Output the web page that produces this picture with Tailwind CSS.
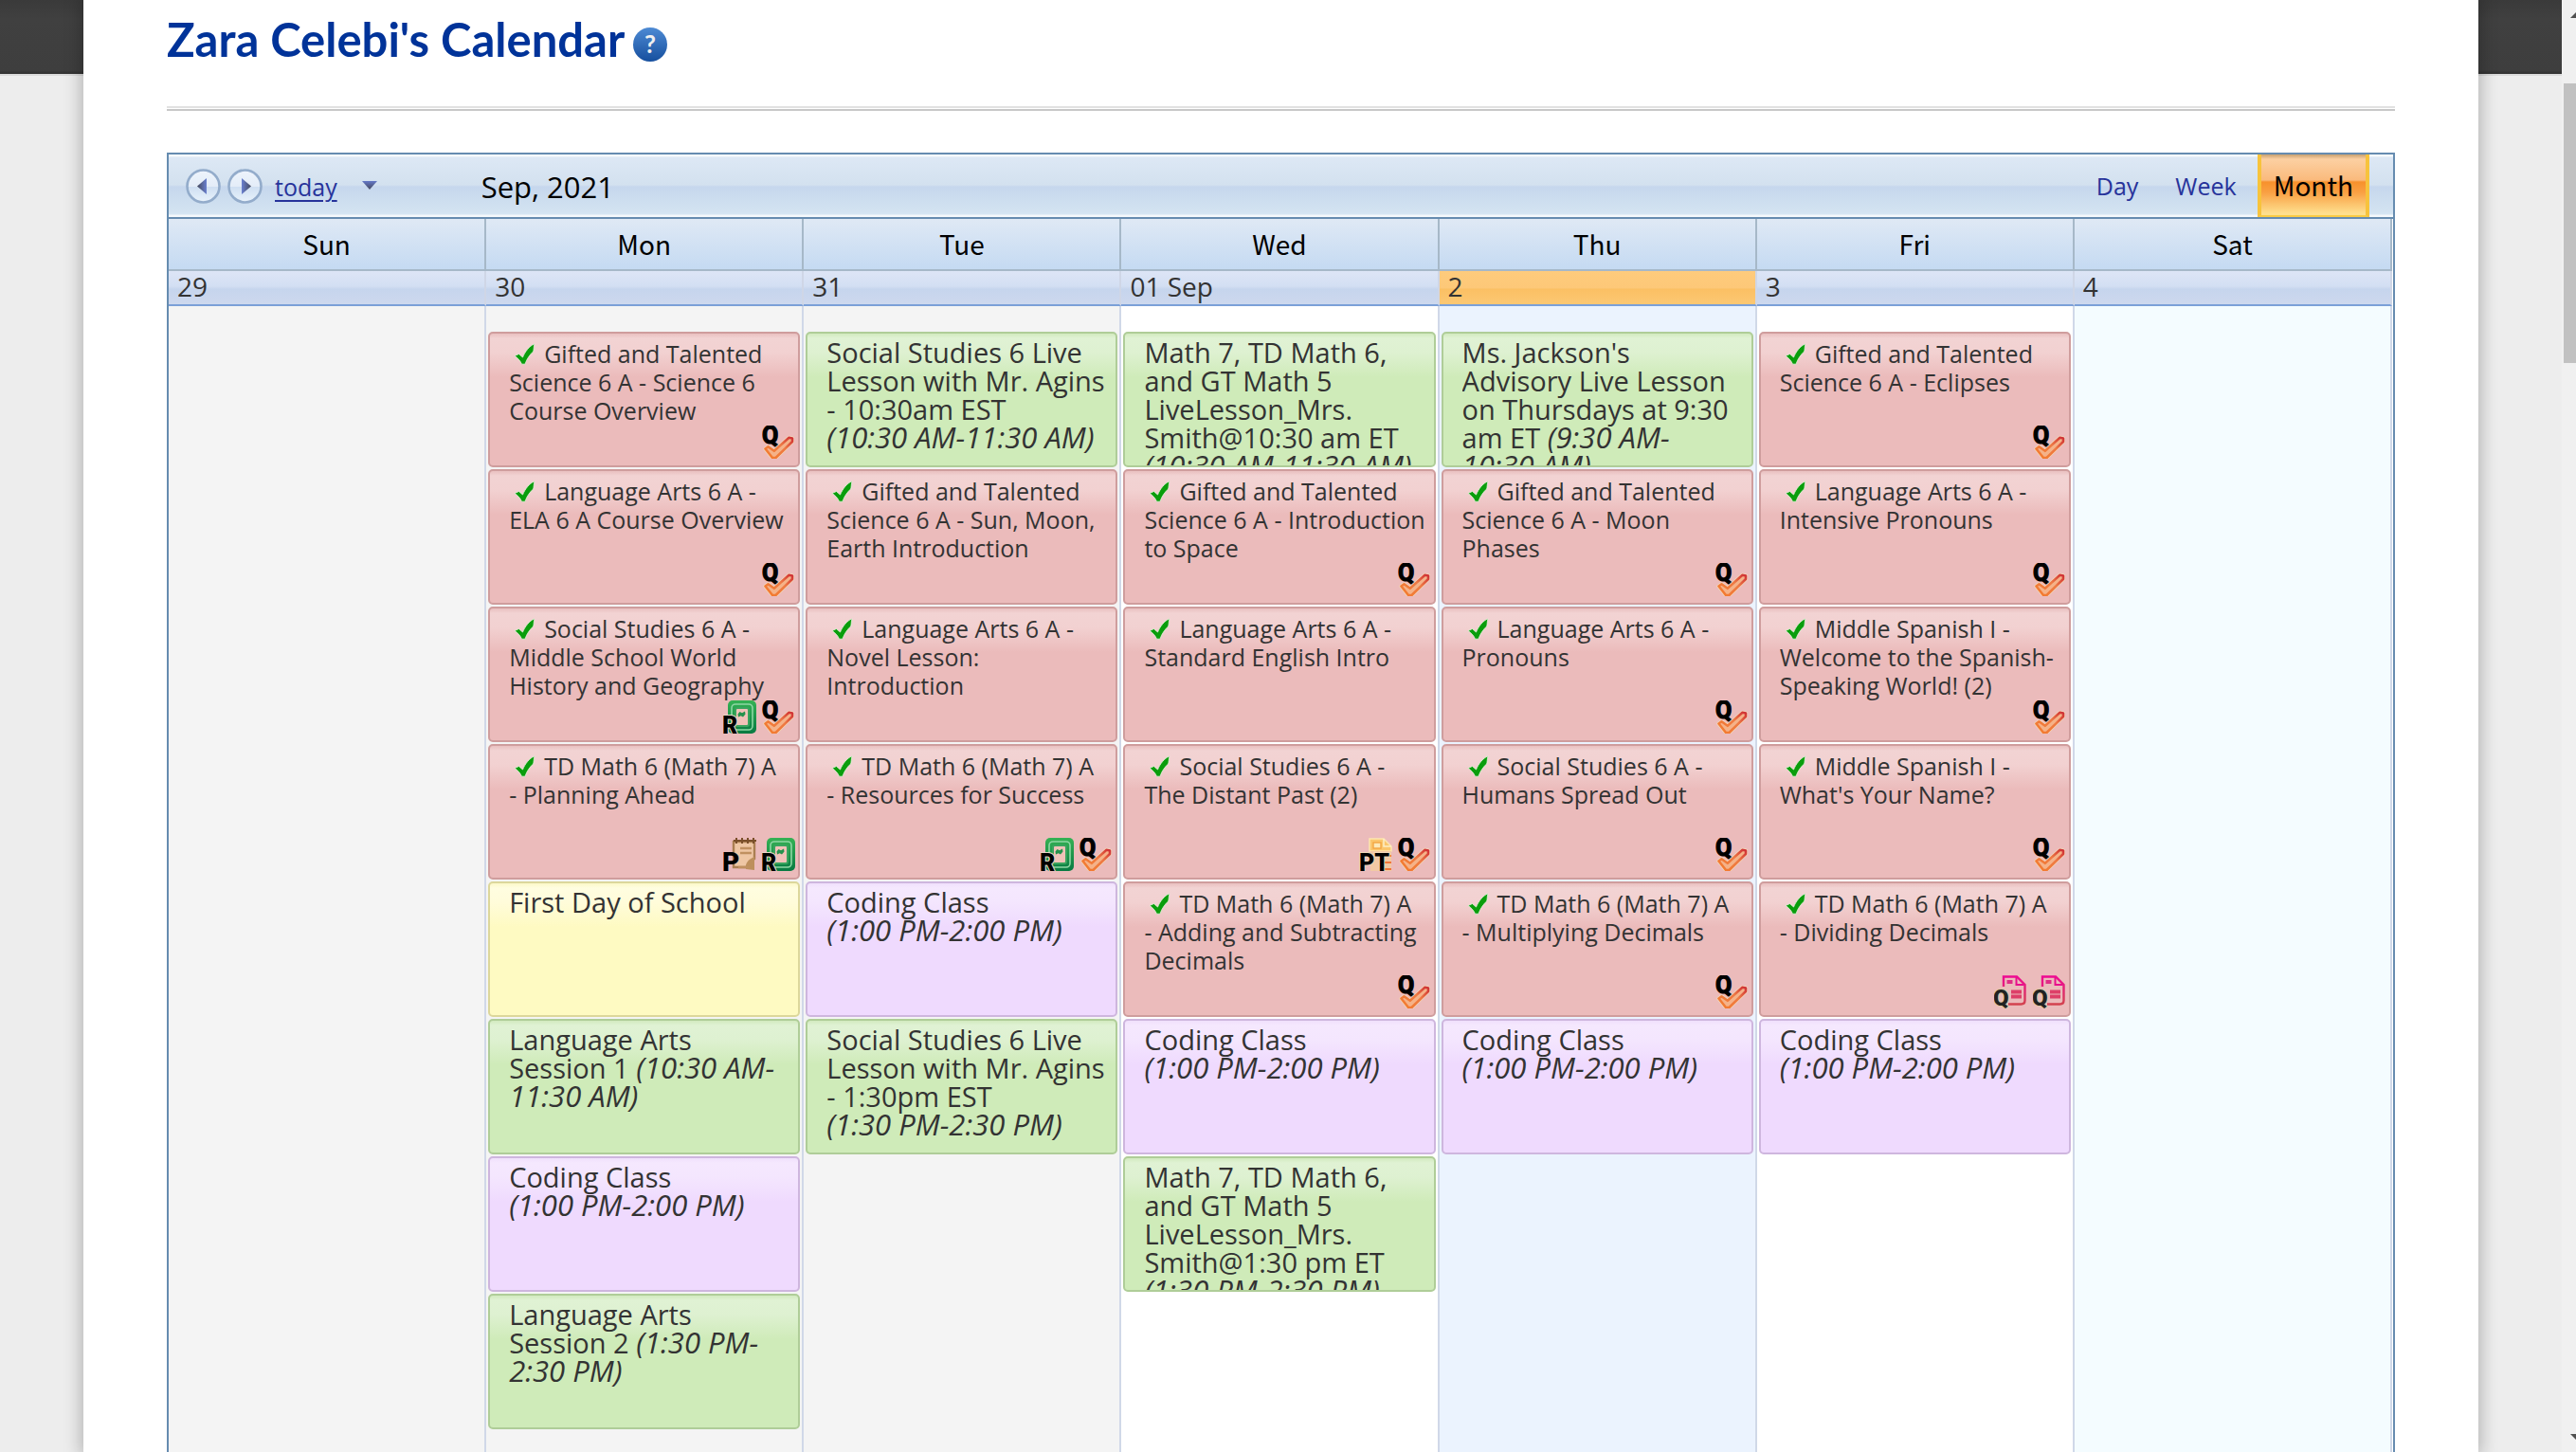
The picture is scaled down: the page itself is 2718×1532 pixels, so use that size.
<!DOCTYPE html>
<html lang="en">
<head>
<meta charset="utf-8">
<title>Zara Celebi's Calendar</title>
<script src="https://cdn.jsdelivr.net/npm/@tailwindcss/browser@4"></script>
</head>
<body class="h-screen overflow-hidden bg-[#ededed] font-['Open_Sans',sans-serif] text-[#333]">

<!-- icon sprites -->
<svg class="absolute size-0" aria-hidden="true">
  <defs>
    <linearGradient id="og" x1="0" y1="1" x2="1" y2="0"><stop offset="0" stop-color="#f47b2c"/><stop offset=".6" stop-color="#ee7a45"/><stop offset="1" stop-color="#cf2f35"/></linearGradient>
    <linearGradient id="gg" x1="0" y1="0" x2="0" y2="1"><stop offset="0" stop-color="#35b254"/><stop offset="1" stop-color="#087a42"/></linearGradient>
    <linearGradient id="bg" x1="0" y1="0" x2="0" y2="1"><stop offset="0" stop-color="#4d8ad4"/><stop offset="1" stop-color="#164f9e"/></linearGradient>
    <linearGradient id="pg" x1="0" y1="0" x2="0" y2="1"><stop offset="0" stop-color="#ee0a92"/><stop offset="1" stop-color="#d3434f"/></linearGradient>
    <linearGradient id="cg" x1="0" y1="0" x2="0" y2="1"><stop offset="0" stop-color="#eef4fc"/><stop offset=".5" stop-color="#e4edf8"/><stop offset=".52" stop-color="#cfdff2"/><stop offset="1" stop-color="#e9f3fb"/></linearGradient>
    <linearGradient id="ag" x1="0" y1="0" x2="1" y2="0"><stop offset="0" stop-color="#454a5c"/><stop offset="1" stop-color="#6a80d0"/></linearGradient>
    <linearGradient id="ah" x1="1" y1="0" x2="0" y2="0"><stop offset="0" stop-color="#454a5c"/><stop offset="1" stop-color="#6a80d0"/></linearGradient>
    <linearGradient id="dg" x1="0" y1="0" x2="0" y2="1"><stop offset="0" stop-color="#6478c8"/><stop offset="1" stop-color="#45485a"/></linearGradient>
  </defs>
  <symbol id="done" viewBox="0 0 22 23">
    <path d="M.5 13.500l4.500-2 4 3.500C11.500 9 16 3 21.500 0.800c-1 3-.6 6.200-1.400 8.200-3.400 3-7 8-8.600 13.200H8C6.500 18.500 3.500 15.500.5 13.500z" fill="#0a9d0c" stroke="#e4f3dc" stroke-width=".8"/>
  </symbol>
  <symbol id="quiz" viewBox="0 0 35 35">
    <path d="M3.500 24.500l3-2.200 6.300 4.500L28.500 12.800l3.500.7v3.500L14.500 34H11z" fill="none" stroke="#f3d9ba" stroke-width="4" stroke-linejoin="round"/>
    <path d="M3.500 24.500l3-2.200 6.300 4.500L28.500 12.800l3.500.7v3.500L14.500 34H11z" fill="#f5b288" stroke="url(#og)" stroke-width="2.600" stroke-linejoin="round"/>
    <text x="0" y="19" font-family="Roboto, sans-serif" font-weight="700" font-size="25" fill="#000" stroke="#000" stroke-width="1.200">Q</text>
  </symbol>
  <symbol id="reflect" viewBox="0 0 35 35">
    <rect x="5" y="0" width="30" height="35" rx="5" fill="url(#gg)"/>
    <rect x="9" y="4" width="22" height="27" rx="4" fill="none" stroke="#8fd6a4" stroke-width="1.600"/>
    <rect x="13" y="8" width="14" height="19" rx="2" fill="#f0c2b8" stroke="#3aa45f" stroke-width="2"/>
    <path d="M15.500 14.500l2-2.500 2.500 1.200 3-1.700.5 3-2.500 3-2.300-1.200-2.700 1.200z" fill="#25924c"/>
    <text x="-1" y="35" font-family="Roboto, sans-serif" font-weight="900" font-size="25" fill="#000" stroke="#e9d6c6" stroke-width="2" paint-order="stroke">R</text>
  </symbol>
  <symbol id="portfolio" viewBox="0 0 35 35">
    <path d="M11 4h22v18l-9 9H11z" fill="#eec6a4" stroke="#ab7f52" stroke-width="2.400"/>
    <path d="M33 20v14l-9-1c-1-6 2-10 9-13z" fill="#bd8f5c"/>
    <path d="M14 0v6M20 0v6M26 0v6M32 0v6M11 3h24" stroke="#7a4f2a" stroke-width="2" fill="none"/>
    <path d="M18 11h12M18 16h12M16 31h12" stroke="#c09060" stroke-width="2.400"/>
    <text x="-1" y="35" font-family="Roboto, sans-serif" font-weight="900" font-size="28" fill="#000">P</text>
  </symbol>
  <symbol id="pretest" viewBox="0 0 35 35">
    <path d="M11 1h15l8 8v5H11z" fill="#fbc66c" stroke="#fde6b0" stroke-width="1.500"/>
    <rect x="15" y="5" width="8" height="6" fill="#fde9b8" stroke="#f2a642" stroke-width="1.400"/>
    <path d="M26 1v8h8" fill="none" stroke="#fdeec8" stroke-width="1.500"/>
    <path d="M12 14h22v21H12z" fill="#f2c9a4"/>
    <path d="M25 19h9M25 26h9M25 33h9" stroke="#f2773a" stroke-width="2.200"/>
    <text x="0" y="35" font-family="Roboto, sans-serif" font-weight="900" font-size="25" fill="#000" stroke="#f0d8b8" stroke-width="2" paint-order="stroke">PT</text>
  </symbol>
  <symbol id="quick" viewBox="0 0 35 35">
    <path d="M10 12V1.500h14L32.500 10v16.500q0 4-4 4H15" fill="none" stroke="url(#pg)" stroke-width="2.400"/>
    <path d="M23.500 2v8h8" fill="none" stroke="#e80f8c" stroke-width="2"/>
    <path d="M13.500 7h6" stroke="#df2d86" stroke-width="4"/>
    <path d="M18 17.500h11M18 22.500h11" stroke="#dd3f68" stroke-width="4"/>
    <text x="-1" y="32" font-family="Roboto, sans-serif" font-weight="900" font-size="24" fill="#222" stroke="#dcc8a4" stroke-width="2" paint-order="stroke">Q</text>
  </symbol>
</svg>

<div class="flex h-screen">
  <div class="min-w-0 flex-1 bg-[linear-gradient(#3a3a3a_0,#404040_20px,#3e3e3e_74px,#303030_78px,#dadada_78px,#dadada_80px,#ededed_80px)] px-[88px]">
    <main class="h-full bg-white px-[88px] pt-3 shadow-[0_0_16px_4px_rgba(0,0,0,0.22)]">
      <header class="flex h-[58px] items-center gap-[9px]">
        <h1 class="font-['Lato',sans-serif] text-[49px] leading-[58px] font-bold text-[#003399]">Zara Celebi's Calendar</h1>
        <button type="button" aria-label="Help" class="mt-3">
          <svg class="size-9" viewBox="0 0 36 36"><circle cx="18" cy="18" r="18" fill="url(#bg)"/><text x="18" y="27" text-anchor="middle" font-family="Lato, sans-serif" font-weight="700" font-size="26" fill="#f0f0f0">?</text></svg>
        </button>
      </header>
      <hr class="mt-[42px] h-[5px] border-x-0 border-t-2 border-b-2 border-t-[#e2e2e2] border-b-[#c8c8c8]">

      <section class="mt-11 border-2 border-[#668cb0]">
        <div class="flex h-[68px] items-center border-b-2 border-[#668cb0] bg-[linear-gradient(#f4f8fb_0,#f4f8fb_2px,#dde8f5_3px,#d3e1ef_32px,#c6d7ed_34px,#d3e3f1_60px,#d6e6f3_63px,#f4f8fb_64px)] pr-[25px] pl-[18px]">
          <div class="flex items-center gap-[7px]">
            <button type="button" aria-label="Previous month"><svg class="size-[37px]" viewBox="0 0 37 37"><circle cx="18.500" cy="18.500" r="17" fill="url(#cg)" stroke="#93accb" stroke-width="2.600"/><path d="M22 10v17l-10-8.500z" fill="url(#ag)"/></svg></button>
            <button type="button" aria-label="Next month"><svg class="size-[37px]" viewBox="0 0 37 37"><circle cx="18.500" cy="18.500" r="17" fill="url(#cg)" stroke="#93accb" stroke-width="2.600"/><path d="M15 10v17l10-8.500z" fill="url(#ah)"/></svg></button>
            <a href="#" class="ml-[6px] pt-[2px] text-[25px] leading-9 text-[#27339b] underline decoration-2 underline-offset-4">today</a>
            <button type="button" aria-label="Pick a date" class="ml-[18px]"><svg class="h-3 w-[18px]" viewBox="0 0 18 12"><path d="M1 1h16l-8 9z" fill="url(#dg)"/></svg></button>
          </div>
          <h2 class="ml-[109px] flex-1 pt-[2px] text-[31px] leading-9 text-black">Sep, 2021</h2>
          <nav class="flex h-full items-center text-[25px] text-[#27339b]">
            <a href="#" class="pt-[2px]">Day</a>
            <a href="#" class="ml-[39px] pt-[2px]">Week</a>
            <a href="#" aria-current="page" class="ml-[22px] flex h-full items-center border-x-4 border-b-2 border-x-[#f7c33c] border-b-[#f9cc45] bg-[linear-gradient(#c8a070_0,#fcd0a2_5px,#faba7c_27px,#f7912c_29px,#f9a043_40px,#fedf8e_62px)] px-[13px] font-['Noto_Sans_CJK_SC',sans-serif] text-[28px] text-black">Month</a>
          </nav>
        </div>

        <table class="w-full table-fixed border-separate border-spacing-0 pr-px">
          <thead>
            <tr id="names"></tr>
          </thead>
          <tbody>
            <tr id="dates"></tr>
            <tr id="events"></tr>
          </tbody>
        </table>
      </section>
    </main>
  </div>

  <div class="flex w-[15px] flex-col bg-[#f0f0f0] pl-[2px]" aria-hidden="true">
    <svg class="mt-3 h-[76px] w-full" viewBox="0 0 13 76"><path d="M7 7l6-6v6z" fill="#505050"/></svg>
    <div class="h-[295px] bg-[#c1c1c1]"></div>
    <svg class="mt-auto mb-3 h-2 w-full" viewBox="0 0 13 8"><path d="M7 1h6v6z" fill="#505050"/></svg>
  </div>
</div>

<script>
const kinds = {
  lesson: 'border-[#cf9d9d] bg-[linear-gradient(#e9c0c0_0,#f2d3d3_5px,#f2d1d1_20px,#ebbbbb_46px)] text-[25px] pt-[6px]',
  live: 'border-[#afcd98] bg-[linear-gradient(#d2eabf_0,#e0f2d4_5px,#def1d1_20px,#cfebb9_46px)] text-[29px] pt-[5px]',
  class: 'border-[#ceb6de] bg-[linear-gradient(#f0e0fc_0,#f5e8fe_5px,#f4e6fe_20px,#efdafe_46px)] text-[29px] pt-[5px]',
  school: 'border-[#dcd79b] bg-[linear-gradient(#fcf8c8_0,#fffde0_5px,#fffcda_20px,#fefac2_46px)] text-[29px] pt-[5px]'
};
const time = t => `<i class="text-[31px] leading-5">${t}</i>`;
const L = (t, ...icons) => ({ k: 'lesson', t, icons });
const V = t => ({ k: 'live', t, icons: [] });
const coding = { k: 'class', t: `Coding Class<br>${time('(1:00 PM-2:00 PM)')}`, icons: [] };
const days = [
  { n: 'Sun', d: '29', bg: 'bg-[#f4f4f4]', e: [] },
  { n: 'Mon', d: '30', bg: 'bg-[#f4f4f4]', e: [
    L('Gifted and Talented<br>Science 6 A - Science 6<br>Course Overview', 'quiz'),
    L('Language Arts 6 A -<br>ELA 6 A Course Overview', 'quiz'),
    L('Social Studies 6 A -<br>Middle School World<br>History and Geography', 'reflect', 'quiz'),
    L('TD Math 6 (Math 7) A<br>- Planning Ahead', 'portfolio', 'reflect'),
    { k: 'school', t: 'First Day of School', icons: [] },
    V(`Language Arts<br>Session 1 ${time('(10:30 AM-<br>11:30 AM)')}`),
    coding,
    V(`Language Arts<br>Session 2 ${time('(1:30 PM-<br>2:30 PM)')}`)] },
  { n: 'Tue', d: '31', bg: 'bg-[#f4f4f4]', e: [
    V(`Social Studies 6 Live<br>Lesson with Mr. Agins<br>- 10:30am EST<br>${time('(10:30 AM-11:30 AM)')}`),
    L('Gifted and Talented<br>Science 6 A - Sun, Moon,<br>Earth Introduction'),
    L('Language Arts 6 A -<br>Novel Lesson:<br>Introduction'),
    L('TD Math 6 (Math 7) A<br>- Resources for Success', 'reflect', 'quiz'),
    coding,
    V(`Social Studies 6 Live<br>Lesson with Mr. Agins<br>- 1:30pm EST<br>${time('(1:30 PM-2:30 PM)')}`)] },
  { n: 'Wed', d: '01 Sep', bg: 'bg-white', e: [
    V(`Math 7, TD Math 6,<br>and GT Math 5<br>LiveLesson_Mrs.<br>Smith@10:30 am ET<br>${time('(10:30 AM-11:30 AM)')}`),
    L('Gifted and Talented<br>Science 6 A - Introduction<br>to Space', 'quiz'),
    L('Language Arts 6 A -<br>Standard English Intro'),
    L('Social Studies 6 A -<br>The Distant Past (2)', 'pretest', 'quiz'),
    L('TD Math 6 (Math 7) A<br>- Adding and Subtracting<br>Decimals', 'quiz'),
    coding,
    V(`Math 7, TD Math 6,<br>and GT Math 5<br>LiveLesson_Mrs.<br>Smith@1:30 pm ET<br>${time('(1:30 PM-2:30 PM)')}`)] },
  { n: 'Thu', d: '2', today: true, bg: 'bg-[#ebf3fe]', e: [
    V(`Ms. Jackson's<br>Advisory Live Lesson<br>on Thursdays at 9:30<br>am ET ${time('(9:30 AM-<br>10:30 AM)')}`),
    L('Gifted and Talented<br>Science 6 A - Moon<br>Phases', 'quiz'),
    L('Language Arts 6 A -<br>Pronouns', 'quiz'),
    L('Social Studies 6 A -<br>Humans Spread Out', 'quiz'),
    L('TD Math 6 (Math 7) A<br>- Multiplying Decimals', 'quiz'),
    coding] },
  { n: 'Fri', d: '3', bg: 'bg-white', e: [
    L('Gifted and Talented<br>Science 6 A - Eclipses', 'quiz'),
    L('Language Arts 6 A -<br>Intensive Pronouns', 'quiz'),
    L('Middle Spanish I -<br>Welcome to the Spanish-<br>Speaking World! (2)', 'quiz'),
    L("Middle Spanish I -<br>What's Your Name?", 'quiz'),
    L('TD Math 6 (Math 7) A<br>- Dividing Decimals', 'quick', 'quick'),
    coding] },
  { n: 'Sat', d: '4', bg: 'bg-[#f4fcff]', e: [] }
];
const card = e => `<li class="relative h-[143px] rounded-[5px] border-2 pl-5 ${kinds[e.k]}">
  <div class="h-full overflow-hidden leading-[30px] whitespace-nowrap">${e.k === 'lesson' ? '<svg class="mr-[8px] ml-[4px] inline-block h-[23px] w-[25px] align-[-2px]"><use href="#done"/></svg>' : ''}${e.t}</div>
  ${e.icons.length ? `<div class="absolute right-[3px] bottom-[7px] flex gap-[6px]">${e.icons.map(i => `<svg class="size-[35px]" role="img" aria-label="${i}"><use href="#${i}"/></svg>`).join('')}</div>` : ''}</li>`;
names.innerHTML = days.map(d => `<th scope="col" class="h-[55px] border-r-2 border-b-2 border-[#a6b8c8] bg-[linear-gradient(#dfe9f5,#c5daf2)] p-0 pb-[2px] font-['Noto_Sans_CJK_SC',sans-serif] text-[28px] leading-[50px] font-normal text-black">${d.n}</th>`).join('');
dates.innerHTML = days.map(d => `<td class="h-[37px] border-r-2 border-b-2 border-r-[#cfd6e6] p-0 pb-[3px] pl-[9px] text-[28px] leading-8 ${d.today ? 'border-b-[#7ba0d8] bg-[linear-gradient(#fecb7c_0,#fdc878_50%,#fbc064_55%,#fcc873)]' : 'border-b-[#7ba0d8] bg-[linear-gradient(#dde5f6_0,#d3dff3_45%,#c6d5ed_55%,#cdd8ee)]'}">${d.d}</td>`).join('');
events.innerHTML = days.map(d => `<td class="border-r-2 border-[#d0d8e8] p-0 px-[2px] pt-[27px] pb-12 align-top ${d.bg}"><ul class="flex flex-col gap-[2px]">${d.e.map(card).join('')}</ul></td>`).join('');
</script>
</body>
</html>
